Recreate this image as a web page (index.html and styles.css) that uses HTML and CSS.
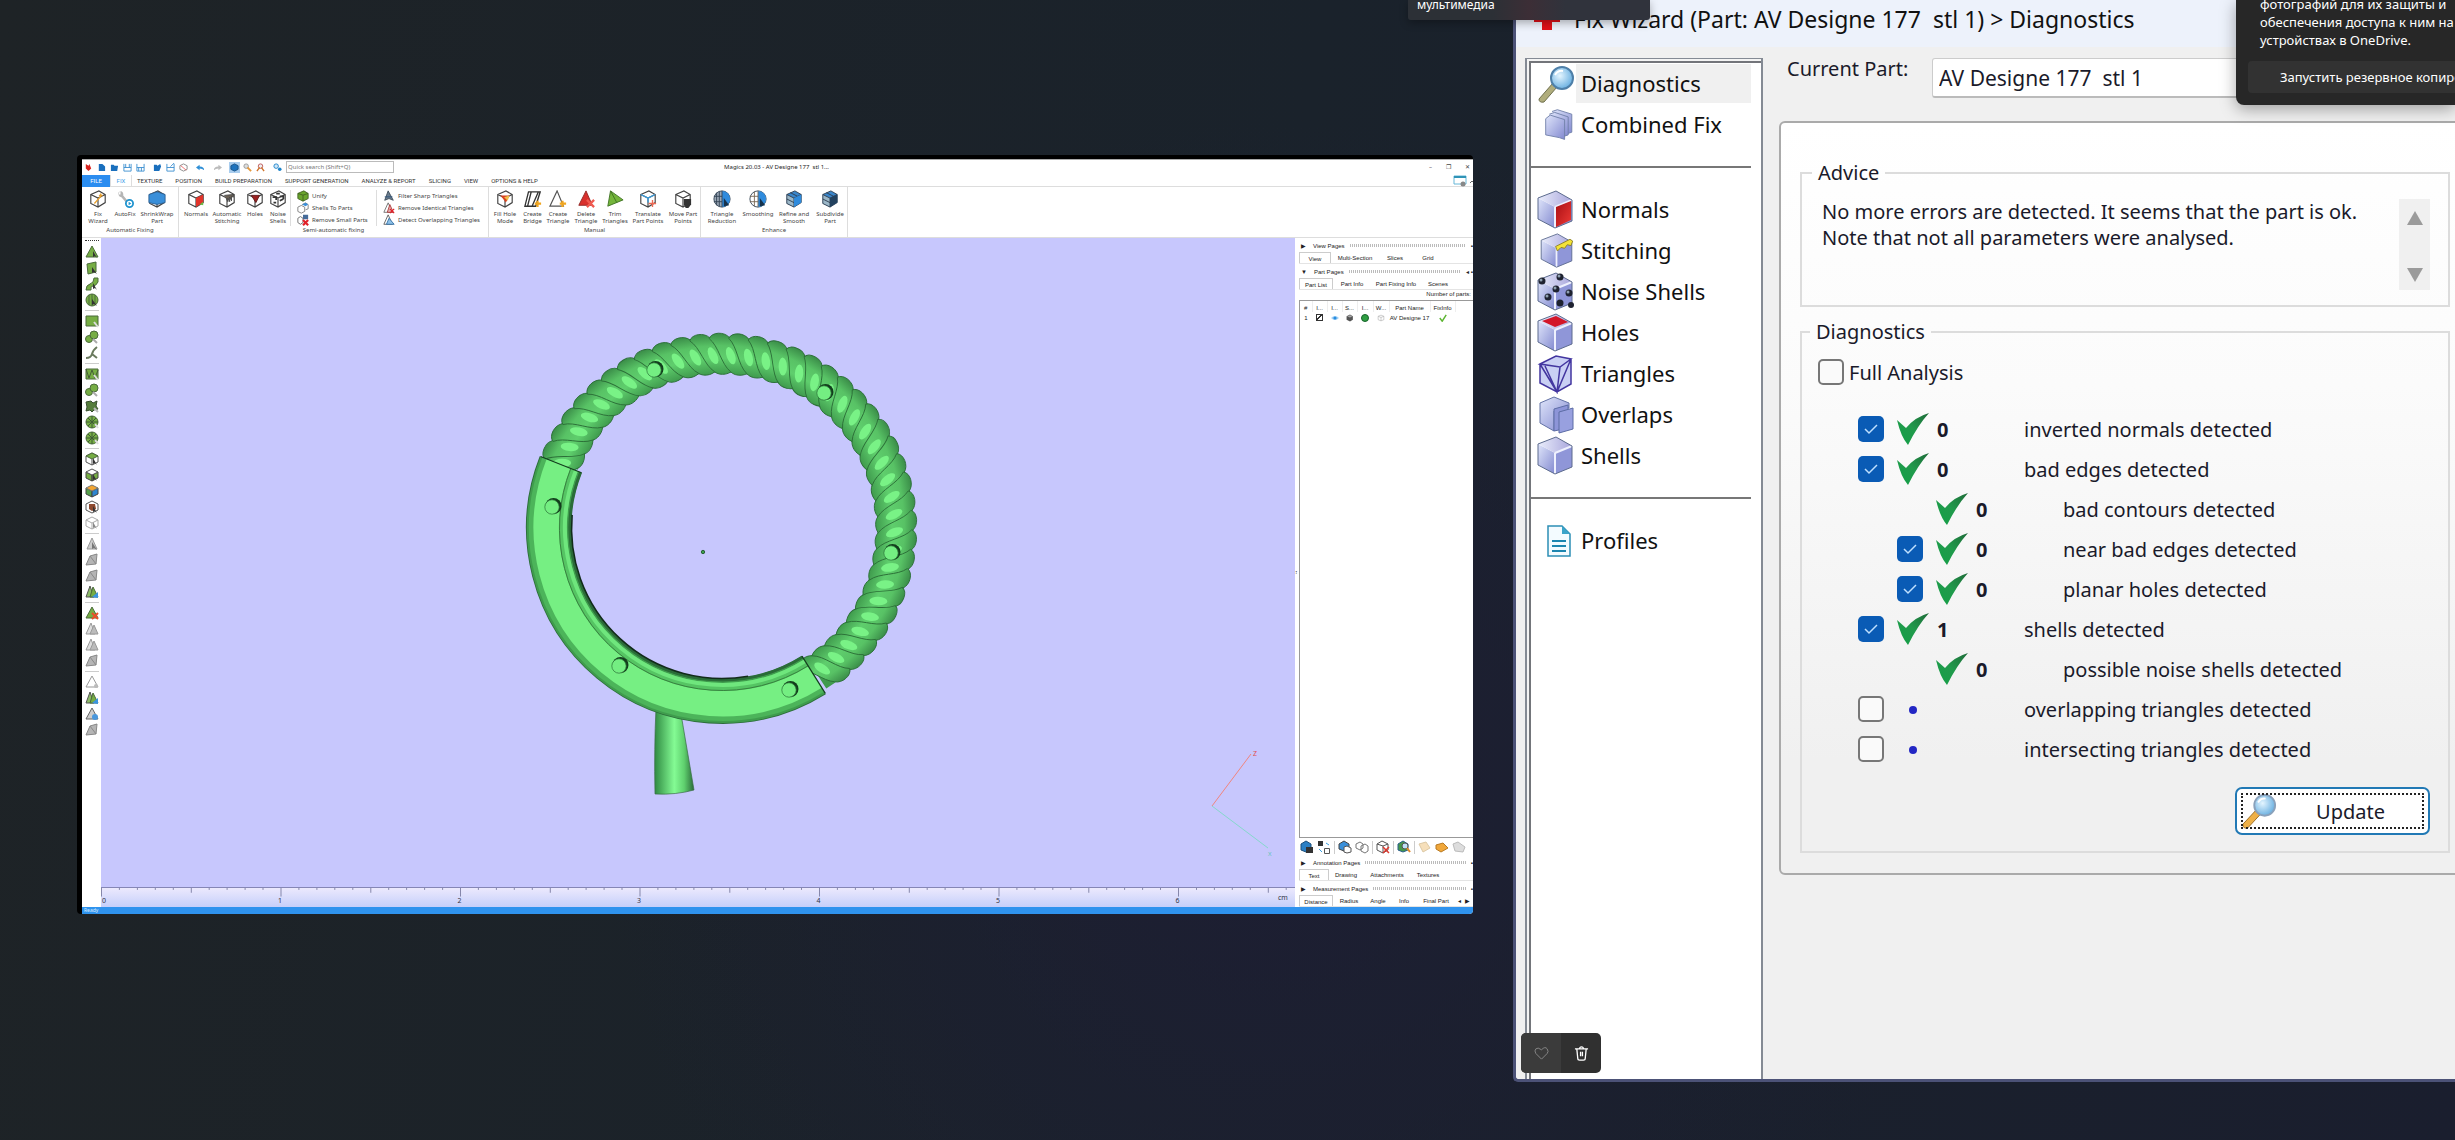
FILE: index.html
```html
<!DOCTYPE html>
<html lang="en">
<head>
<meta charset="utf-8">
<title>Fix Wizard</title>
<link rel="stylesheet" href="styles.css">
</head>
<body>
<svg class="defs" aria-hidden="true">
  <defs>
    <linearGradient id="lav" x1="0" y1="0" x2="1" y2="1"><stop offset="0" stop-color="#dfe5fa"/><stop offset="1" stop-color="#8289d0"/></linearGradient>
    <linearGradient id="lavTop" x1="0" y1="0" x2="1" y2="0"><stop offset="0" stop-color="#e9edfb"/><stop offset="1" stop-color="#a9a6dc"/></linearGradient>
    <linearGradient id="redFace" x1="0" y1="0" x2="1" y2="1"><stop offset="0" stop-color="#a80f14"/><stop offset="1" stop-color="#ee3a35"/></linearGradient>
    <radialGradient id="lens" cx=".4" cy=".4" r=".7"><stop offset="0" stop-color="#e4f5ff"/><stop offset="1" stop-color="#5aa7dd"/></radialGradient>
    <linearGradient id="tick" x1="0" y1="1" x2="1" y2="0"><stop offset="0" stop-color="#12a046"/><stop offset=".5" stop-color="#219a4c"/><stop offset="1" stop-color="#1d6b38"/></linearGradient>
    <linearGradient id="cone" x1="0" y1="0" x2="1" y2="0"><stop offset="0" stop-color="#2f8a42"/><stop offset=".5" stop-color="#84fb94"/><stop offset=".75" stop-color="#5fd06e"/><stop offset="1" stop-color="#2a6a39"/></linearGradient>
    <linearGradient id="strand" x1="0" y1="0" x2="0" y2="1"><stop offset="0" stop-color="#3a8c48"/><stop offset=".3" stop-color="#58c265"/><stop offset=".6" stop-color="#5fce6d"/><stop offset="1" stop-color="#3f9a4d"/></linearGradient>

    <symbol id="s-cube" viewBox="0 0 38 40">
      <path d="M2 8 19 17V38L2 29Z" fill="url(#lav)"/><path d="M19 17 36 10V31L19 38Z" fill="#8f96d8"/><path d="M2 8 20 1 36 10 19 17Z" fill="url(#lavTop)"/>
      <path d="M19 17V38M19 17 36 10" stroke="#eef0fd" stroke-width="2" fill="none"/><path d="M2 8 20 1 36 10V31L19 38 2 29Z" fill="none" stroke="#5c6b8e" stroke-width="1"/>
    </symbol>
    <symbol id="s-lens" viewBox="0 0 38 38"><path d="m3 34 14-16 4 4L8 37Q3 38 3 34Z" fill="#b0ad7c" stroke="#6f704f"/><circle cx="26" cy="13" r="11" fill="url(#lens)" stroke="#4e7fa8" stroke-width="2"/><path d="M19 10q3-5 8-4" stroke="#fff" stroke-width="2" fill="none"/></symbol>
    <symbol id="s-lens2" viewBox="0 0 38 38"><path d="m2 33 13-14 5 4L7 37Q2 38 2 33Z" fill="#eeb047" stroke="#9a6c23"/><circle cx="25" cy="13" r="11" fill="url(#lens)" stroke="#8aa1bb" stroke-width="2"/><path d="M18 10q3-5 8-4" stroke="#fff" stroke-width="2" fill="none"/></symbol>
    <symbol id="s-tick" viewBox="0 0 32 32"><path d="M0 7 9 15Q18 4 32 0 21 12 11 32 4 24 0 7Z" fill="url(#tick)"/></symbol>

    <symbol id="m-cube" viewBox="0 0 20 20"><path d="M2 5 11 1 18 5V14L10 19 2 15Z" fill="#fff"/><path d="M2 5 11 1 18 5V14L10 19 2 15ZM2 5 10 9 18 5M10 9V19" fill="none" stroke="#444" stroke-width="1.3"/></symbol>
    <symbol id="m-blue" viewBox="0 0 20 20"><path d="M2 5 11 1 18 5V14L10 19 2 15Z" fill="#3a86cb"/><path d="M2 5 10 9V19L2 15Z" fill="#9bb7c8"/><path d="M2 5 11 1 18 5V14L10 19 2 15ZM2 5 10 9 18 5M10 9V19M2 10 10 14M6 3 14 7" fill="none" stroke="#2c3c4e"/></symbol>
    <symbol id="m-green" viewBox="0 0 14 14"><path d="M1 4 8 1 13 4V10L7 13 1 10Z" fill="#6aa52c" stroke="#3f601f"/><path d="M1 4 7 6 13 4M7 6V13" stroke="#3f601f" fill="none"/></symbol>
    <symbol id="t-tri" viewBox="0 0 14 14"><path d="M7 1 13 12H1Z" fill="#76ad44" stroke="#4b6b3b"/><path d="M8 6V12L10 11 12 13Z" fill="#333"/></symbol>
    <symbol id="t-quad" viewBox="0 0 14 14"><path d="M2 3 11 1V11L3 13Z" fill="#76ad44" stroke="#4b6b3b"/><path d="M7 6V12L9 11 12 13Z" fill="#333"/></symbol>
    <symbol id="t-wave" viewBox="0 0 14 14"><path d="M1 13Q1 8 5 7T9 1H13V5Q11 9 8 9T6 13Z" fill="#76ad44" stroke="#4b6b3b"/><path d="M8 6V12L10 11 12 13Z" fill="#333"/></symbol>
    <symbol id="t-ball" viewBox="0 0 14 14"><circle cx="7" cy="7" r="6" fill="#76ad44" stroke="#4b6b3b"/><path d="M4 2V12M7 1V13M10 2V12" stroke="#4b6b3b"/><path d="M7 6V12L9 11 12 13Z" fill="#333"/></symbol>
    <symbol id="t-rect" viewBox="0 0 14 14"><path d="M1 2H13V12H1Z" fill="#76ad44" stroke="#4b6b3b"/><path d="m9 8 4 5" stroke="#ddd" stroke-width="2"/></symbol>
    <symbol id="t-rectw" viewBox="0 0 14 14"><path d="M1 2H13V12H1Z" fill="#76ad44" stroke="#4b6b3b"/><path d="M1 2 4 11 7 3 10 11 13 3" stroke="#445d37" fill="none"/><path d="m9 8 4 5" stroke="#ddd" stroke-width="2"/></symbol>
    <symbol id="t-duo" viewBox="0 0 14 14"><circle cx="4" cy="9" r="3.5" fill="#76ad44" stroke="#4b6b3b"/><circle cx="9" cy="5" r="4" fill="#76ad44" stroke="#4b6b3b"/><path d="m8 9 4 4" stroke="#aaa" stroke-width="2"/></symbol>
    <symbol id="t-path" viewBox="0 0 14 14"><path d="M1 12Q6 12 7 8T12 1M7 8 12 12" stroke="#6a7a5e" stroke-width="2" fill="none"/></symbol>
    <symbol id="t-wheel" viewBox="0 0 14 14"><circle cx="7" cy="7" r="6" fill="#76ad44" stroke="#4b6b3b"/><path d="M7 1V13M1 7H13M3 3 11 11M11 3 3 11" stroke="#3f5c34"/><path d="m10 9 3 4" stroke="#ddd" stroke-width="2"/></symbol>
    <symbol id="t-burst" viewBox="0 0 14 14"><path d="m1 3 5-1 2 2 4-2-1 5 2 3-4 1-2 2-2-2-4 1 1-4Z" fill="#567d3c" stroke="#394f30"/><path d="m9 9 4 4" stroke="#bbb" stroke-width="2"/></symbol>
    <symbol id="t-cube" viewBox="0 0 14 14"><path d="M1 4 7 1 13 4V10L7 13 1 10Z" fill="#fff" stroke="#555"/><path d="M1 4 7 1 13 4 7 7Z" fill="#76ad44" stroke="#4b6b3b"/><path d="M7 7V13" stroke="#555"/><path d="M8 6V12L10 11 12 13Z" fill="#333"/></symbol>
    <symbol id="t-cube2" viewBox="0 0 14 14"><path d="M1 4 7 7V13L1 10Z M7 7 13 4V10L7 13Z" fill="#76ad44" stroke="#444"/><path d="M1 4 7 1 13 4 7 7Z" fill="#fff" stroke="#555"/><path d="M8 6V12L10 11 12 13Z" fill="#333"/></symbol>
    <symbol id="t-cube3" viewBox="0 0 14 14"><path d="M1 4 7 7V13L1 10Z" fill="#56a04a" stroke="#444"/><path d="M7 7 13 4V10L7 13Z" fill="#2d84cf" stroke="#444"/><path d="M1 4 7 1 13 4 7 7Z" fill="#f2a634" stroke="#777"/></symbol>
    <symbol id="t-cube4" viewBox="0 0 14 14"><path d="M1 4 7 1 13 4V10L7 13 1 10Z" fill="#fff" stroke="#555"/><path d="M4 4 10 4 11 9 7 11 4 9Z" fill="#8e4a30"/><path d="M8 6V12L10 11 12 13Z" fill="#333"/></symbol>
    <symbol id="t-cube5" viewBox="0 0 14 14"><path d="M1 4 7 1 13 4V10L7 13 1 10ZM1 4 7 7 13 4M7 7V13" fill="#fff" stroke="#aaa"/><path d="M8 6V12L10 11 12 13Z" fill="#888"/></symbol>
    <symbol id="t-gtri" viewBox="0 0 14 14"><path d="M7 1 12 12H2Z" fill="#ccc" stroke="#999"/><path d="M7 5V12L9 11 12 13Z" fill="#777"/></symbol>
    <symbol id="t-gquad" viewBox="0 0 14 14"><path d="M5 3 12 1 11 11 1 12Z" fill="#b5b5b5" stroke="#888"/><path d="M5 3 11 11" stroke="#888"/></symbol>
    <symbol id="t-g2tri" viewBox="0 0 14 14"><path d="M6 1 10 12H1Z" fill="#ddd" stroke="#999"/><path d="M9 3 13 12H5Z" fill="#bbb" stroke="#999"/></symbol>
    <symbol id="t-bluetri" viewBox="0 0 14 14"><path d="M5 1 9 12H1Z" fill="#8dbb68" stroke="#555"/><path d="M8 2 13 12H5Z" fill="#76ad44" stroke="#4b6b3b"/><path d="m7 12 6-5v6Z" fill="#3c94e0"/></symbol>
    <symbol id="t-redx" viewBox="0 0 14 14"><path d="M7 1 13 12H1Z" fill="#76ad44" stroke="#4b6b3b"/><path d="m7 7 6 6m0-6-6 6" stroke="#e94f2b" stroke-width="2"/></symbol>
    <symbol id="t-wtri" viewBox="0 0 14 14"><path d="M7 1 13 12H1Z" fill="#fff" stroke="#999"/><circle cx="11" cy="11" r="2" fill="#bbb"/></symbol>
    <symbol id="t-btri" viewBox="0 0 14 14"><path d="M7 1 13 12H1Z" fill="#ccc" stroke="#666"/><circle cx="10" cy="10" r="3" fill="#4a97dc"/></symbol>
  </defs>
</svg>

<main class="desk">
  <section class="left-half">
    <div class="shot">
      <div class="app">
        <header class="titlebar">
          <div class="quick">
            <svg class="q" viewBox="0 0 10 10"><path d="m2 1 3 2 1-2 2 5-3 3-3-3Z" fill="#d9241f"/></svg>
            <svg class="q" viewBox="0 0 10 10"><path d="M2 1H6L9 4V9H2Z" fill="#1a6fbd"/></svg>
            <svg class="q" viewBox="0 0 10 10"><path d="M1 2H4L5 3H9L8 9H1Z" fill="#1a6fbd"/></svg>
            <svg class="q" viewBox="0 0 10 10"><path d="M1 1V9H9V1M1 5H9M3 1V5M7 1V5" stroke="#3c8fd0" fill="none"/></svg>
            <svg class="q" viewBox="0 0 10 10"><path d="M1 1V9H9V1M1 5H9M3 9V5M6 9V5" stroke="#3c8fd0" fill="none"/></svg>
            <svg class="q wide" viewBox="0 0 10 10"><path d="M1 2H4L5 3 8 1 9 4 7 9H1Z" fill="#1a6fbd"/></svg>
            <svg class="q" viewBox="0 0 10 10"><path d="M1 1V9H9V1M1 5H9M5 4 9 0" stroke="#3c8fd0" fill="none"/></svg>
            <svg class="q" viewBox="0 0 10 10"><path d="M1 3 5 1 9 3V7L5 9 1 7Z" stroke="#888" fill="#fff"/><path d="m2 3 6 5" stroke="#e66"/></svg>
            <svg class="q wide" viewBox="0 0 10 10"><path d="M0 5 4 2V4Q9 4 9 8 7 6 4 6V8Z" fill="#2f8fd6"/></svg>
            <svg class="q wide" viewBox="0 0 10 10"><path d="M10 5 6 2V4Q1 4 1 8 3 6 6 6V8Z" fill="#bbb"/></svg>
            <svg class="q wide on" viewBox="0 0 10 10"><path d="M1 3 5 1 9 3V7L5 9 1 7Z" fill="#1c72bd" stroke="#145188"/></svg>
            <svg class="q" viewBox="0 0 10 10"><circle cx="3.5" cy="3.5" r="2.5" fill="#ddd" stroke="#999"/><path d="m5 5 4 4" stroke="#e5993c" stroke-width="2"/></svg>
            <svg class="q" viewBox="0 0 10 10"><circle cx="5" cy="3.5" r="2.5" fill="#eee" stroke="#b55"/><path d="M4 5 1 9M6 5 9 9" stroke="#d0742c" stroke-width="1.5"/></svg>
            <svg class="q wide" viewBox="0 0 10 10"><circle cx="3.5" cy="3.5" r="2.5" fill="#cfe6f7" stroke="#1c83c9"/><circle cx="7.5" cy="7" r="2" fill="#1c83c9"/></svg>
            <input class="search" type="text" aria-label="Quick search" placeholder="Quick search (Shift+Q)">
          </div>
          <span class="app-title">Magics 20.03 - AV Designe 177&nbsp; stl 1...</span>
          <div class="winbtns"><span>–</span><span>❐</span><span>✕</span></div>
        </header>
        <nav class="tabs">
          <a class="file" href="#">FILE</a><a class="fix" href="#">FIX</a>
          <a href="#">TEXTURE</a><a href="#">POSITION</a><a href="#">BUILD PREPARATION</a><a href="#">SUPPORT GENERATION</a><a href="#">ANALYZE &amp; REPORT</a><a href="#">SLICING</a><a href="#">VIEW</a><a href="#">OPTIONS &amp; HELP</a>
          <svg class="tabicon" viewBox="0 0 20 12"><path d="M1 1H13V9H1Z" fill="#fff" stroke="#67b7d8"/><path d="M1 1H13V3H1Z" fill="#2f93b6"/><circle cx="10" cy="9" r="2.5" fill="#888"/><path d="m17 8 2-2 1 1" stroke="#666" fill="none"/></svg>
        </nav>
        <div class="ribbon">
          <div class="group">
            <div class="tools">
              <button class="w30"><svg viewBox="0 0 20 20"><use href="#m-cube"/><path d="m6 15 8-9M13 4v4M11 6h4" stroke="#e9a12e" stroke-width="1.5"/></svg>Fix<br>Wizard</button>
              <button class="w24"><svg viewBox="0 0 20 20"><path d="M4 1a4 4 0 0 0 2 7l6 7 2-2-6-7a4 4 0 0 0-3-5v4L3 5Z" fill="#b5b5b5"/><circle cx="15" cy="15" r="4" fill="#fff" stroke="#1f93cf" stroke-width="2"/><path d="m14 13 3 2-3 2Z" fill="#1f93cf"/></svg>AutoFix</button>
              <button class="w40"><svg viewBox="0 0 20 20"><use href="#m-cube"/><path d="M1 5 10 2 19 5V14L10 16 1 14Z" fill="#3a8fd9" stroke="#2a5f92"/></svg>ShrinkWrap<br>Part</button>
            </div>
            <div class="glabel">Automatic Fixing</div>
          </div>
          <div class="group">
            <div class="tools">
              <button class="w32"><svg viewBox="0 0 20 20"><use href="#m-cube"/><path d="M10 9 18 5V14L10 19Z" fill="#e2332a"/><path d="m14 16 4-3v4Z" fill="#6bbd45"/></svg>Normals</button>
              <button class="w30"><svg viewBox="0 0 20 20"><use href="#m-cube"/><path d="M7 6 17 5V8L15 7V12L13 8V13L11 9V13L9 9" fill="#6b6155" stroke="#444"/></svg>Automatic<br>Stitching</button>
              <button class="w26"><svg viewBox="0 0 20 20"><use href="#m-cube"/><path d="M6 6H15L11 14Z" fill="#9c2222" stroke="#5d1717"/></svg>Holes</button>
              <button class="w20"><svg viewBox="0 0 20 20"><use href="#m-cube"/><path d="M4 8h4v3M12 7h4v3M5 14h3M12 12l4-2M8 4h4" stroke="#333" stroke-width="2" fill="none"/></svg>Noise<br>Shells</button>
              <div class="list w84">
                <button><svg viewBox="0 0 14 14"><use href="#m-green"/></svg>Unify</button>
                <button><svg viewBox="0 0 14 14"><path d="M1 6 5 4 9 6V11L5 13 1 11ZM6 3 10 1 13 3V8L10 9" fill="#fff" stroke="#777"/><path d="M6 3 10 1 13 3 10 5Z" fill="#3a8fd9"/></svg>Shells To Parts</button>
                <button><svg viewBox="0 0 14 14"><path d="M1 5 4 3 7 5V10L4 12 1 10Z" fill="#fff" stroke="#666"/><path d="M7 1H13V6H7Z" fill="#456b99"/><path d="m7 7 6 6m0-6-6 6" stroke="#e0232a" stroke-width="2.5"/></svg>Remove Small Parts</button>
              </div>
              <div class="list w111">
                <button><svg viewBox="0 0 14 14"><path d="M6 1 12 12 7 10 2 12Z" fill="#6b7d8e" stroke="#3a4a58"/><path d="M2 8h9" stroke="#294f78"/></svg>Filter Sharp Triangles</button>
                <button><svg viewBox="0 0 14 14"><path d="M6 1 11 12H1Z" fill="#fff" stroke="#666"/><path d="M8 3 12 12H5Z" fill="#e2b3b3" stroke="#a33"/><path d="m8 8 5 5m0-5-5 5" stroke="#e0232a" stroke-width="1.5"/></svg>Remove Identical Triangles</button>
                <button><svg viewBox="0 0 14 14"><path d="M6 1 11 12H1Z" fill="#fff" stroke="#555"/><path d="M7 5 13 12H4Z" fill="#8fc1e8" stroke="#2f6ea5"/></svg>Detect Overlapping Triangles</button>
              </div>
            </div>
            <div class="glabel">Semi-automatic fixing</div>
          </div>
          <div class="group">
            <div class="tools">
              <button class="w30"><svg viewBox="0 0 20 20"><use href="#m-cube"/><path d="M5 6H15L11 14Z" fill="#d8431f"/><path d="M9 8 15 6 13 12Z" fill="#f0c04a"/></svg>Fill Hole<br>Mode</button>
              <button class="w25"><svg viewBox="0 0 20 20"><path d="M5 2H18L13 18H1ZM8 2 4 18M16 2 9 18" fill="#fff" stroke="#333" stroke-width="1.5"/><path d="M15 12v7M12 15h7" stroke="#f0a51f" stroke-width="2.5"/></svg>Create<br>Bridge</button>
              <button class="w26"><svg viewBox="0 0 20 20"><path d="M9 1 16 18H1Z" fill="#fff" stroke="#555" stroke-width="1.3"/><path d="M15 12v7M12 15h7" stroke="#f0a51f" stroke-width="2.5"/></svg>Create<br>Triangle</button>
              <button class="w30"><svg viewBox="0 0 20 20"><path d="M10 1 17 17H2Z" fill="#d9302c" stroke="#8e2522"/><path d="m11 11 8 8m0-8-8 8" stroke="#f05a50" stroke-width="2.5"/></svg>Delete<br>Triangle</button>
              <button class="w28"><svg viewBox="0 0 20 20"><path d="M5 1 19 11 2 18Z" fill="#74b53b" stroke="#3d7022"/><path d="M5 1 12 14" stroke="#3d7022"/></svg>Trim<br>Triangles</button>
              <button class="w38"><svg viewBox="0 0 20 20"><use href="#m-cube"/><path d="M2 5 10 9 18 5M10 9V14" stroke="#3a9fe0" fill="none" stroke-width="1.5"/><path d="M15 11v8M11 15h8" stroke="#ee6a55" stroke-width="1.5"/></svg>Translate<br>Part Points</button>
              <button class="w32"><svg viewBox="0 0 20 20"><use href="#m-cube"/><path d="M11 10h8v6l-3 4h-3l-2-4Z" fill="#333"/></svg>Move Part<br>Points</button>
            </div>
            <div class="glabel">Manual</div>
          </div>
          <div class="group">
            <div class="tools">
              <button class="w40"><svg viewBox="0 0 20 20"><circle cx="10" cy="10" r="9" fill="#9aa7b5" stroke="#345"/><path d="M10 1a9 9 0 0 1 0 18Z" fill="#2f8bdd"/><path d="M1 7h9M1 13h9M4 3v14M7 2v16M10 1v18" stroke="#345"/><path d="m12 9 6 8-6 1Z" fill="#17324c"/></svg>Triangle<br>Reduction</button>
              <button class="w32"><svg viewBox="0 0 20 20"><circle cx="10" cy="10" r="9" fill="#fff" stroke="#345"/><path d="M10 1a9 9 0 0 1 0 18Z" fill="#2f8bdd"/><path d="M1 7h9M1 13h9M6 2v16M10 1v18" stroke="#765"/><path d="m12 9 6 8-6 1Z" fill="#17324c"/></svg>Smoothing</button>
              <button class="w40"><svg viewBox="0 0 20 20"><use href="#m-blue"/><path d="M10 9 18 5V14L10 19Z" fill="#2f8bdd"/></svg>Refine and<br>Smooth</button>
              <button class="w32"><svg viewBox="0 0 20 20"><use href="#m-blue"/><path d="M10 9 18 5V14L10 19Z" fill="#22415f"/></svg>Subdivide<br>Part</button>
            </div>
            <div class="glabel">Enhance</div>
          </div>
        </div>
        <div class="work">
          <div class="sidebar">
            <div class="grip"></div>
            <svg><use href="#t-tri"/></svg><svg><use href="#t-quad"/></svg><svg><use href="#t-wave"/></svg><svg><use href="#t-ball"/></svg><hr>
            <svg><use href="#t-rect"/></svg><svg><use href="#t-duo"/></svg><svg><use href="#t-path"/></svg><hr>
            <svg><use href="#t-rectw"/></svg><svg><use href="#t-duo"/></svg><svg><use href="#t-burst"/></svg><svg><use href="#t-wheel"/></svg><svg><use href="#t-wheel"/></svg><hr>
            <svg><use href="#t-cube"/></svg><svg><use href="#t-cube2"/></svg><svg><use href="#t-cube3"/></svg><svg><use href="#t-cube4"/></svg><svg><use href="#t-cube5"/></svg><hr>
            <svg><use href="#t-gtri"/></svg><svg><use href="#t-gquad"/></svg><svg><use href="#t-gquad"/></svg><svg><use href="#t-bluetri"/></svg><hr>
            <svg><use href="#t-redx"/></svg><svg><use href="#t-g2tri"/></svg><svg><use href="#t-g2tri"/></svg><svg><use href="#t-gquad"/></svg><hr>
            <svg><use href="#t-wtri"/></svg><svg><use href="#t-bluetri"/></svg><svg><use href="#t-btri"/></svg><svg><use href="#t-gquad"/></svg>
          </div>
          <div class="stage">
            <svg class="model" viewBox="0 0 1194 649" role="img" aria-label="Ring model">
              <path d="M555 470 580 476 593 552Q575 557 554 556Q553 510 555 470Z" fill="url(#cone)" stroke="#3a6f45" stroke-width=".7"/>
              <g id="rope"></g>
              <g id="band"></g>
              <g id="pins"></g>
              <circle cx="602" cy="314" r="1.7" fill="#3aa04a" stroke="#164a22" stroke-width=".8"/>
              <path d="M1111 568 1150 516" stroke="#f0847e" fill="none"/><path d="M1111 568 1167 610" stroke="#86d8cc" fill="none"/>
              <text x="1152" y="518" class="axis-z">Z</text><text x="1167" y="618" class="axis-x">X</text>
            </svg>
            <svg class="ruler" viewBox="0 0 1194 20" preserveAspectRatio="none" aria-hidden="true"><g id="ticks"></g></svg>
          </div>
          <div class="splitter">↕</div>
          <aside class="pages">
            <div class="ptitle">▶<b>View Pages</b><i></i>▪</div>
            <div class="ptabs"><a class="sel w32" href="#">View</a><a class="w48" href="#">Multi-Section</a><a class="w32" href="#">Slices</a><a class="w34" href="#">Grid</a></div>
            <div class="ptitle">▼<b>Part Pages</b><i></i>◂ ▪</div>
            <div class="ptabs"><a class="sel w34" href="#">Part List</a><a class="w38" href="#">Part Info</a><a class="w50" href="#">Part Fixing Info</a><a class="w34" href="#">Scenes</a></div>
            <div class="count">Number of parts:</div>
            <div class="plist">
              <table>
                <colgroup><col class="c12"><col class="c15"><col class="c15"><col class="c15"><col class="c16"><col class="c16"><col class="c41"><col class="c25"></colgroup>
                <thead><tr><th>#</th><th>I...</th><th>I...</th><th>S...</th><th>I...</th><th>W...</th><th>Part Name</th><th>FixInfo</th></tr></thead>
                <tbody><tr><td>1</td><td><input type="checkbox" class="mini" checked aria-label="Part visible"></td><td><svg viewBox="0 0 10 8"><path d="M0 4Q5-1 10 4 5 9 0 4Z" fill="#9fd0f5"/><circle cx="5" cy="4" r="2" fill="#2a8de0"/></svg></td><td><svg viewBox="0 0 14 14"><path d="M1 4 7 1 12 4V10L7 13 1 10Z" fill="#555"/><path d="M2 4 7 2 11 4 7 6Z" fill="#aaa"/></svg></td><td><svg viewBox="0 0 8 8"><circle cx="4" cy="4" r="3.5" fill="#2f9e42" stroke="#16642a"/></svg></td><td><svg viewBox="0 0 14 14"><path d="M2 4 7 2 12 4V10L7 12 2 10ZM2 4 7 6 12 4M7 6V12" fill="none" stroke="#aaa"/></svg></td><td>AV Designe 17</td><td><svg viewBox="0 0 10 10"><path d="m1 5 3 4 5-8" stroke="#5cb531" stroke-width="1.8" fill="none"/></svg></td></tr></tbody>
              </table>
            </div>
            <div class="picons">
              <svg viewBox="0 0 14 14"><path d="M1 4 6 1 11 4V10L6 12 1 10Z" fill="#2a7fc4" stroke="#1b4f7b"/><path d="M6 7h7v6H6Z" fill="#333"/></svg>
              <svg viewBox="0 0 14 14"><path d="M1 1h5v5H1Z" fill="#333"/><path d="M7.5 8.5h5v5h-5Z" fill="#fff" stroke="#555"/><path d="m9 3 3 2M2 9l3 3" stroke="#3a9fe0"/></svg><hr>
              <svg viewBox="0 0 14 14"><path d="M1 4 6 1 11 4V9L6 11 1 9Z" fill="#3a8fd9" stroke="#444"/><path d="M6 7 9 6 13 8V12L9 13 6 12Z" fill="#fff" stroke="#555"/></svg>
              <svg viewBox="0 0 14 14"><path d="M1 4 5 2 8 4V8L5 10 1 8ZM6 6 10 4 13 6V11L10 13 6 11Z" fill="#fff" stroke="#777"/></svg><hr>
              <svg viewBox="0 0 14 14"><path d="M1 4 6 1 12 4V10L7 13 1 10ZM1 4 7 6 12 4M7 6V13" fill="#fff" stroke="#555"/><path d="m7 7 6 6m0-6-6 6" stroke="#e0392f" stroke-width="1.5"/></svg><hr>
              <svg viewBox="0 0 14 14"><path d="M1 4 6 1 11 4V10L6 12 1 10Z" fill="#45964a" stroke="#2b5f8b"/><circle cx="8" cy="6" r="3" fill="#bfe0f5" stroke="#555"/><path d="m10 8 3 4" stroke="#e38a2a" stroke-width="2"/></svg><hr>
              <svg viewBox="0 0 14 14"><path d="M1 4 8 2 12 8 5 12Z" fill="#f6dfba" stroke="#ddc9a5"/></svg>
              <svg viewBox="0 0 14 14"><path d="M1 5 8 3 13 8 6 12 1 9Z" fill="#f0a73a" stroke="#b97a22"/></svg>
              <svg viewBox="0 0 14 14"><path d="M1 4 6 2 13 7 11 12 3 11Z" fill="#ddd" stroke="#bbb"/></svg>
            </div>
            <div class="ptitle">▶<b>Annotation Pages</b><i></i>▪</div>
            <div class="ptabs"><a class="sel w30" href="#">Text</a><a class="w34" href="#">Drawing</a><a class="w48" href="#">Attachments</a><a class="w34" href="#">Textures</a></div>
            <div class="ptitle">▶<b>Measurement Pages</b><i></i>▪</div>
            <div class="ptabs"><a class="sel w34" href="#">Distance</a><a class="w32" href="#">Radius</a><a class="w26" href="#">Angle</a><a class="w26" href="#">Info</a><a class="w38" href="#">Final Part</a><a class="w8" href="#">◂</a><a class="w8" href="#">▶</a></div>
          </aside>
        </div>
        <footer class="status">Ready</footer>
      </div>
    </div>
  </section>

  <section class="wizard">
    <h1 class="wtitle"><svg viewBox="0 0 26 26"><path d="M8 0H18V8H26V18H18V26H8V18H0V8H8Z" fill="#e01119"/></svg>Fix Wizard (Part: AV Designe 177&nbsp; stl 1) &gt; Diagnostics</h1>
    <div class="wbody">
      <nav class="wnav">
        <a class="sel" href="#"><svg viewBox="0 0 38 38"><use href="#s-lens"/></svg><span>Diagnostics</span></a>
        <a href="#"><svg class="sm" viewBox="0 0 38 40"><g fill="url(#lav)" stroke="#6f7fa8"><path d="M14 5 20 3 36 8V28L30 30"/><path d="M11 8 17 6 32 11V31L26 33"/><path d="M7 13 12 9 28 14V36L22 34 7 31Z"/></g></svg><span>Combined Fix</span></a>
        <hr>
        <a href="#"><svg viewBox="0 0 38 40"><use href="#s-cube"/><path d="M20 17 35 11V30L20 37Z" fill="url(#redFace)"/></svg><span>Normals</span></a>
        <a href="#"><svg class="sm" viewBox="0 0 38 40"><use href="#s-cube"/><path d="M18 15 34 7 37 9 35 14 31 13 28 17 24 16 20 20Z" fill="#f4e338" stroke="#8a7e22"/></svg><span>Stitching</span></a>
        <a href="#"><svg viewBox="0 0 38 40"><use href="#s-cube"/><g fill="#1e2230"><circle cx="6" cy="9" r="3.5"/><circle cx="24" cy="5" r="3.5"/><circle cx="20" cy="17" r="3.5"/><circle cx="12" cy="25" r="3.5"/><circle cx="33" cy="21" r="3.5"/><circle cx="24" cy="31" r="3.5"/><circle cx="35" cy="33" r="3"/></g><g fill="#8fa0b0"><circle cx="5" cy="8" r="1.5"/><circle cx="23" cy="4" r="1.5"/><circle cx="19" cy="16" r="1.5"/><circle cx="11" cy="24" r="1.5"/><circle cx="32" cy="20" r="1.5"/></g></svg><span>Noise Shells</span></a>
        <a href="#"><svg viewBox="0 0 38 40"><use href="#s-cube"/><path d="M6 8 20 3 32 9 19 14Z" fill="#d31629"/></svg><span>Holes</span></a>
        <a href="#"><svg viewBox="0 0 38 40"><path d="M4 10 20 2 35 5V30L21 38 4 29Z" fill="#c9d0f4"/><path d="M4 10 20 2 35 5 24 13ZM4 10V29L21 38 35 30V5M4 10 21 38 35 5M24 13 21 38 9 12" fill="none" stroke="#4336a0" stroke-width="1.5"/></svg><span>Triangles</span></a>
        <a href="#"><svg viewBox="0 0 38 40"><path d="M4 8 18 2 33 8V13L18 16V36L4 28Z" fill="url(#lav)" stroke="#6272a5"/><path d="M18 14 32 10V33L18 36Z" fill="#8d95d8" stroke="#5c6ca5"/><path d="M23 17 37 13V34L23 38Z" fill="#98a0df" stroke="#5c6ca5"/></svg><span>Overlaps</span></a>
        <a href="#"><svg viewBox="0 0 38 40"><use href="#s-cube"/></svg><span>Shells</span></a>
        <hr>
        <a href="#"><svg viewBox="0 0 38 38"><path d="M12 4H26L34 12V34H12Z" fill="#f3fbff" stroke="#2d8fb5" stroke-width="1.5"/><path d="M26 4V12H34Z" fill="#3ba4c9"/><path d="M16 19H30M16 24H30M16 29H30" stroke="#1d86b0" stroke-width="2"/></svg><span>Profiles</span></a>
      </nav>
      <div class="wmain">
        <div class="current"><label for="part">Current Part:</label><select id="part"><option>AV Designe 177&nbsp; stl 1</option></select></div>
        <div class="panel">
          <fieldset class="advice">
            <legend>Advice</legend>
            <p>No more errors are detected. It seems that the part is ok.<br>Note that not all parameters were analysed.</p>
            <div class="scroll"><svg viewBox="0 0 18 14"><path d="M9 0 17 14H1Z"/></svg><svg viewBox="0 0 18 14"><path d="M1 0H17L9 14Z"/></svg></div>
          </fieldset>
          <fieldset class="diag">
            <legend>Diagnostics</legend>
            <label class="full"><input type="checkbox">Full Analysis</label>
            <div class="rows">
              <label><input type="checkbox" checked><svg class="ok"><use href="#s-tick"/></svg><b>0</b><span>inverted normals detected</span></label>
              <label><input type="checkbox" checked><svg class="ok"><use href="#s-tick"/></svg><b>0</b><span>bad edges detected</span></label>
              <div class="line in"><em></em><svg class="ok"><use href="#s-tick"/></svg><b>0</b><span>bad contours detected</span></div>
              <label class="in"><input type="checkbox" checked><svg class="ok"><use href="#s-tick"/></svg><b>0</b><span>near bad edges detected</span></label>
              <label class="in"><input type="checkbox" checked><svg class="ok"><use href="#s-tick"/></svg><b>0</b><span>planar holes detected</span></label>
              <label><input type="checkbox" checked><svg class="ok"><use href="#s-tick"/></svg><b>1</b><span>shells detected</span></label>
              <div class="line in"><em></em><svg class="ok"><use href="#s-tick"/></svg><b>0</b><span>possible noise shells detected</span></div>
              <label><input type="checkbox"><svg class="ok" viewBox="0 0 32 32"><circle cx="16" cy="17" r="4" fill="#2327c4"/></svg><b></b><span>overlapping triangles detected</span></label>
              <label><input type="checkbox"><svg class="ok" viewBox="0 0 32 32"><circle cx="16" cy="17" r="4" fill="#2327c4"/></svg><b></b><span>intersecting triangles detected</span></label>
            </div>
            <button class="update"><svg><use href="#s-lens2"/></svg><span>Update</span></button>
          </fieldset>
        </div>
      </div>
    </div>
    <div class="actions">
      <button aria-label="Favourite"><svg viewBox="0 0 16 16"><path d="M8 14 2 8Q0 5 2 3T8 4Q12 0 14 3T14 8Z" fill="none" stroke="#8a8a8a"/></svg></button>
      <button aria-label="Delete"><svg viewBox="0 0 16 16"><path d="M1 3H15M6 3Q6 1 8 1T10 3M3 3 4 13Q4 15 6 15H10Q12 15 12 13L13 3M7 6V11M9 6V11" fill="none" stroke="#fff" stroke-width="1.4"/></svg></button>
    </div>
  </section>
</main>
<div class="tip">мультимедиа</div>
<div class="toast"><p>фотографий для их защиты и<br>обеспечения доступа к ним на<br>устройствах в OneDrive.</p><button>Запустить резервное копирование</button></div>
<script src="model.js"></script>
</body>
</html>
```
FILE: styles.css
```css
* { box-sizing: border-box; }
body { margin: 0; min-height: 100vh; overflow: hidden; position: relative; font-family: "Noto Sans", sans-serif; color: #111;
  background: radial-gradient(circle at 52% 70%, #1d1e33 0, rgba(29,30,51,0) 45%), linear-gradient(100deg, #1e2326, #1a222b 50%, #1a1e2e); }
.defs { position: absolute; width: 0; height: 0; }
a { color: inherit; text-decoration: none; }
button { font: inherit; color: inherit; border: 0; background: none; padding: 0; margin: 0; }
.desk { display: grid; grid-template-columns: 1513fr 942fr; min-height: 100vh; }

/* modelling application */
.left-half { padding: 155px 40px 0 77px; min-width: 0; }
.shot { background: #000; padding: 4px 0 0 5px; border-radius: 4px; }
.app { background: #fff; border-radius: 0 0 4px 0; overflow: hidden; font-size: 6px; line-height: 7px; color: #444; }
.titlebar { display: flex; align-items: center; height: 16px; border-top: 1px solid #aaa; padding-bottom: 1px; }
.quick { display: flex; align-items: center; gap: 2px; padding-left: 1px; flex: 1 1 0; }
.q { width: 11px; height: 11px; padding: 1px; flex: none; }
.q.wide { margin-left: 4px; }
.q.on { background: #a9cdee; }
.search { width: 108px; height: 12px; margin-left: 1px; border: 1px solid #bbb; padding: 0 1px; font: 6px "Noto Sans", sans-serif; color: #555; }
.search::placeholder { color: #777; }
.app-title { color: #222; }
.winbtns { flex: 1 1 0; display: flex; justify-content: flex-end; gap: 14px; padding-right: 3px; }
.tabs { display: flex; align-items: center; height: 12px; gap: 13px; border-bottom: 1px solid #ddd; font-family: Roboto, sans-serif; color: #333; }
.tabs .file { background: #2b8df0; color: #fff; width: 28px; line-height: 12px; text-align: center; margin-right: -13px; }
.tabs .fix { color: #4a9fe8; width: 22px; line-height: 12px; text-align: center; margin-right: -8px; border: 1px solid #ddd; border-width: 0 1px; }
.tabicon { width: 20px; height: 12px; margin-left: auto; }
.ribbon { display: flex; height: 51px; border-bottom: 1px solid #ddd; }
.group { border-right: 1px solid #ddd; padding: 3px 1px 0 1px; }
.tools { display: flex; height: 37px; align-items: flex-start; }
.tools > button { text-align: center; white-space: nowrap; display: flow-root; }
.tools > button svg { display: block; width: 18px; height: 18px; margin: 0 auto 3px; }
.list { display: grid; grid-auto-rows: 12px; border-left: 1px solid #ddd; margin-left: 2px; padding-left: 6px; }
.list button { display: flex; align-items: center; gap: 3px; white-space: nowrap; }
.list svg { width: 12px; height: 12px; flex: none; }
.glabel { text-align: center; }
.w8 { width: 8px; } .w20 { width: 20px; } .w24 { width: 24px; } .w25 { width: 25px; } .w26 { width: 26px; } .w28 { width: 28px; } .w30 { width: 30px; }
.w32 { width: 32px; } .w34 { width: 34px; } .w38 { width: 38px; } .w40 { width: 40px; } .w48 { width: 48px; } .w50 { width: 50px; }
.w84 { width: 84px; } .w111 { width: 111px; }
.work { display: flex; min-height: 669px; }
.sidebar { width: 19px; flex: none; display: flex; flex-direction: column; align-items: center; }
.sidebar svg { width: 14px; height: 16px; padding: 1px 0; flex: none; }
.sidebar hr { width: 14px; height: 1px; margin: 2px 0; border: 0; background: #ccc; flex: none; }
.grip { width: 14px; border-top: 1px dotted #333; margin: 2px 0 3px; }
.stage { flex: 1; min-width: 0; background: #c7c7fd; display: flex; flex-direction: column; }
.model { display: block; width: 100%; flex: 1; min-height: 0; }
.axis-z { font-size: 7px; fill: #e05050; } .axis-x { font-size: 6px; fill: #63c4b8; }
.ruler { display: block; width: 100%; height: 20px; flex: none; background: linear-gradient(#ece9fd, #c5cffa); border-top: 1px solid #8586b5; }
.ruler text { font-size: 7px; fill: #334; }
.splitter { width: 4px; flex: none; display: flex; align-items: center; color: #222; font-size: 5px; }
.pages { width: 174px; flex: none; padding-top: 1px; font: 6px/8px "Liberation Sans", sans-serif; color: #222; display: flex; flex-direction: column; overflow: hidden; }
.ptitle { display: flex; align-items: center; gap: 5px; height: 13px; padding: 0 0 0 2px; white-space: nowrap; }
.ptitle b { font-weight: normal; margin-left: 2px; }
.ptitle i { flex: 1; height: 3px; background: repeating-linear-gradient(90deg, #bbb 0 1px, #fff 1px 2px); }
.ptabs { display: flex; height: 12px; line-height: 12px; border-bottom: 1px solid #e4e4e4; }
.ptabs a { text-align: center; white-space: nowrap; flex: none; }
.ptabs .sel { border: 1px solid #ccc; border-bottom: 0; }
.ptabs + .ptitle { margin-top: 1px; }
.count { text-align: right; padding-right: 2px; height: 10px; }
.plist { flex: 1; border: 1px solid #999; border-right: 0; overflow: hidden; }
.plist table { table-layout: fixed; border-collapse: collapse; width: 155px; }
.c12 { width: 12px; } .c15 { width: 15px; } .c16 { width: 16px; } .c25 { width: 25px; } .c41 { width: 41px; }
.plist th, .plist td { font-weight: normal; padding: 0; height: 11px; text-align: center; border-right: 1px solid #eee; white-space: nowrap; }
.plist td { border: 0; }
.plist thead th { padding-top: 2px; }
.plist svg { width: 8px; height: 8px; display: block; margin: auto; }
.mini { appearance: none; width: 7px; height: 7px; border: 1px solid #333; margin: auto; display: block; background: linear-gradient(135deg, #fff 40%, #333 40% 60%, #fff 60%); }
.picons { display: flex; align-items: center; gap: 3px; height: 18px; padding-left: 1px; }
.picons svg { width: 14px; height: 14px; flex: none; }
.picons hr { width: 1px; height: 13px; border: 0; background: #ccc; margin: 0; flex: none; }
.status { height: 7px; background: #2f93ee; color: #d8ecff; padding-left: 2px; font-size: 5px; }

/* fix wizard */
.wizard { position: relative; margin-bottom: 58px; background: #f0f0f0; border: solid #4c5277; border-width: 0 0 3px 3px; border-radius: 0 0 0 5px; overflow: hidden; display: flex; flex-direction: column; }
.wtitle { margin: 0; height: 47px; flex: none; background: #edf2fb; font-size: 23px; font-weight: normal; line-height: 38px; display: flex; white-space: nowrap; gap: 14px; padding-left: 18px; }
.wtitle svg { width: 26px; height: 26px; margin-top: 4px; flex: none; }
.wbody { flex: 1; display: flex; min-height: 0; }
.wnav { width: 238px; flex: none; margin: 11px 0 0 9px; background: #fff; border: 1px solid #848a94; border-width: 1px 2px 0 2px; box-shadow: inset 2px 2px #f4f4f4, inset 4px 4px #73757a; padding: 4px 10px 0 9px; font-size: 22px; }
.wnav a { display: flex; align-items: center; height: 41px; gap: 2px; }
.wnav a svg { width: 38px; height: 40px; flex: none; }
.wnav a svg.sm { padding: 2px 0 2px 3px; }
.wnav a span { flex: 1; padding-left: 5px; line-height: 39px; white-space: nowrap; }
.wnav .sel span { background: #f0f0f0; }
.wnav hr { height: 2px; margin: 21px 0 21px -5px; border: 0; background: #777; }
.wmain { flex: 1; min-width: 0; padding: 11px 0 0 16px; font-size: 20px; color: #1a1a2a; }
.current { display: flex; height: 40px; padding-left: 8px; }
.current label { width: 145px; line-height: 22px; white-space: nowrap; }
.current select { flex: 1; appearance: none; font: inherit; font-size: 21px; color: inherit; background: #fff; border: 1px solid #ccc; border-bottom: 2px solid #bbb; border-radius: 3px; padding: 0 6px; }
.panel { margin: 23px -5px 0 0; border: 2px solid #aaa; border-radius: 6px; background: linear-gradient(#fff, #fbfbfb 35%, #f0f0f0 85%); padding: 36px 8px 20px 19px; }
fieldset { margin: 0; border: 2px solid #dcdcdc; min-width: 0; }
legend { padding: 0 6px; margin-left: -10px; line-height: 28px; }
.advice { height: 148px; display: flex; padding: 12px 18px 0 20px; }
.advice p { margin: 0; flex: 1; line-height: 26px; white-space: nowrap; }
.scroll { width: 31px; height: 91px; background: #f0f0f0; display: flex; flex-direction: column; align-items: center; justify-content: space-between; padding: 12px 0 8px; flex: none; }
.scroll svg { width: 18px; height: 14px; fill: #9b9b9b; }
.diag { margin-top: 11px; padding: 10px 18px 16px; display: flex; flex-direction: column; }
.diag label, .line { display: flex; align-items: center; height: 40px; white-space: nowrap; }
.diag .full { height: 32px; gap: 5px; margin-left: -2px; }
.diag input { appearance: none; width: 26px; height: 26px; flex: none; margin: 0; border: 2px solid #777; border-radius: 5px; background: #fafafa; }
.diag input:checked { border: 0; background: #0a5bb5 url("data:image/svg+xml,%3Csvg xmlns='http://www.w3.org/2000/svg' viewBox='0 0 26 26'%3E%3Cpath d='m7 13 4 4 8-8' fill='none' stroke='%23bfe0ff' stroke-width='1.5'/%3E%3C/svg%3E"); }
.rows { padding: 21px 0 0 38px; }
.rows em { width: 26px; }
.rows .in { padding-left: 39px; }
.rows .ok { width: 32px; height: 32px; margin: 0 8px 0 13px; flex: none; }
.rows b { width: 87px; }
.update { align-self: flex-end; margin-top: 18px; width: 195px; height: 48px; border: 2px solid #2179b5; border-radius: 7px; background: #fff; padding: 4px; display: flex; align-items: center; outline: 2px dotted #222; outline-offset: -8px; }
.update svg { width: 36px; height: 38px; }
.update span { flex: 1; text-align: center; }
.actions { position: absolute; left: 5px; bottom: 6px; display: flex; border-radius: 5px; overflow: hidden; background: #303030; }
.actions button { width: 40px; height: 40px; display: grid; place-items: center; }
.actions button:first-child { background: #3b3b3b; }
.actions svg { width: 15px; height: 15px; }

/* notifications */
.tip { position: absolute; top: 0; left: 1408px; width: 242px; height: 20px; padding-left: 9px; background: linear-gradient(90deg, #2c3036 35%, #3c2e36 50%, #30333c 65%); color: #fff; font-size: 12px; line-height: 10px; border-radius: 0 0 3px 3px; box-shadow: 0 3px 8px rgba(0,0,0,.3); }
.toast { position: absolute; top: 0; right: 0; width: 219px; height: 105px; overflow: hidden; background: #272727; color: #fff; border-radius: 0 0 0 8px; font-size: 13px; box-shadow: 0 4px 16px rgba(0,0,0,.35); padding-left: 12px; white-space: nowrap; }
.toast p { margin: -5px 0 12px 12px; line-height: 18px; }
.toast button { display: block; width: 300px; height: 32px; padding-left: 32px; text-align: left; background: #323232; border-radius: 4px; }
```
FILE: model.js
```js
const NS = 'http://www.w3.org/2000/svg';
const add = (parent, tag, attrs, text) => {
  const el = document.createElementNS(NS, tag);
  for (const k in attrs) el.setAttribute(k, attrs[k]);
  if (text !== undefined) el.textContent = text;
  document.getElementById(parent).appendChild(el);
};
const CX = 621, CY = 290;
// angle is clockwise from twelve o'clock
const pt = (r, a) => {
  const t = a * Math.PI / 180;
  return (CX + r * Math.sin(t)).toFixed(1) + ' ' + (CY - r * Math.cos(t)).toFixed(1);
};
const arc = (parent, r, w, color, from = -68.5, to = -212) =>
  add(parent, 'path', { d: `M${pt(r, from)}A${r} ${r} 0 0 ${to > from ? 1 : 0} ${pt(r, to)}`, stroke: color, 'stroke-width': w, fill: 'none' });

// twisted rope
arc('rope', 173.5, 36, '#3f9a4d', -68, 40);
arc('rope', 173.5, 36, '#3f9a4d', 38, 147);
for (let a = -68; a <= 148; a += 5.9) {
  const place = `rotate(${a} ${CX} ${CY}) translate(${CX} ${CY - 173.5})`;
  add('rope', 'path', { d: 'M-22-15C-20-22-7-23-2-17C7-10 10 8 21 14C18 21 6 22 1 17C-9 10-12-8-22-15Z', transform: place, fill: 'url(#strand)', stroke: '#2c7038', 'stroke-width': 0.9 });
  add('rope', 'ellipse', { cx: 0, cy: 1, rx: 4.2, ry: 9, transform: place + ' rotate(-22)', fill: '#79f286' });
}

// plain band, built up from rim to face
arc('band', 173.5, 45, '#2c6c3a');
arc('band', 174, 42, '#3f9c4d');
arc('band', 190, 6, '#4cb45a');
arc('band', 175, 27, '#76ef83');
arc('band', 159, 8, '#55c463');
arc('band', 157, 4, '#6fe67d');
arc('band', 152, 3, '#2a6c38');
arc('band', 150.5, 1.6, '#122c1a', -85, -190);
arc('band', 162.5, 1, '#37813f');
for (const a of [-68.5, -212])
  add('band', 'path', { d: `M${pt(151, a)}L${pt(195, a)}`, stroke: '#14401f', 'stroke-width': 1.2 });

for (const [x, y] of [[553, 132], [723, 155], [790, 315], [451, 269], [518, 428], [688, 452]]) {
  add('pins', 'circle', { cx: x + 1.5, cy: y - 1, r: 8, fill: '#133d1d' });
  add('pins', 'circle', { cx: x, cy: y, r: 7.2, fill: '#74ee82', stroke: '#2b7438', 'stroke-width': 0.7 });
}

// ruler
for (let i = 0; i <= 66; i++) {
  const x = (i * 17.95 + 0.5).toFixed(1);
  const h = i % 10 === 0 ? 9 : i % 5 === 0 ? 5 : 2;
  add('ticks', 'path', { d: `M${x} 0V${h}`, stroke: '#8384a8' });
  if (i % 10 === 0) add('ticks', 'text', { x: i ? x - 3 : 1, y: 16 }, i / 10);
}
add('ticks', 'text', { x: 1177, y: 13 }, 'cm');
```
